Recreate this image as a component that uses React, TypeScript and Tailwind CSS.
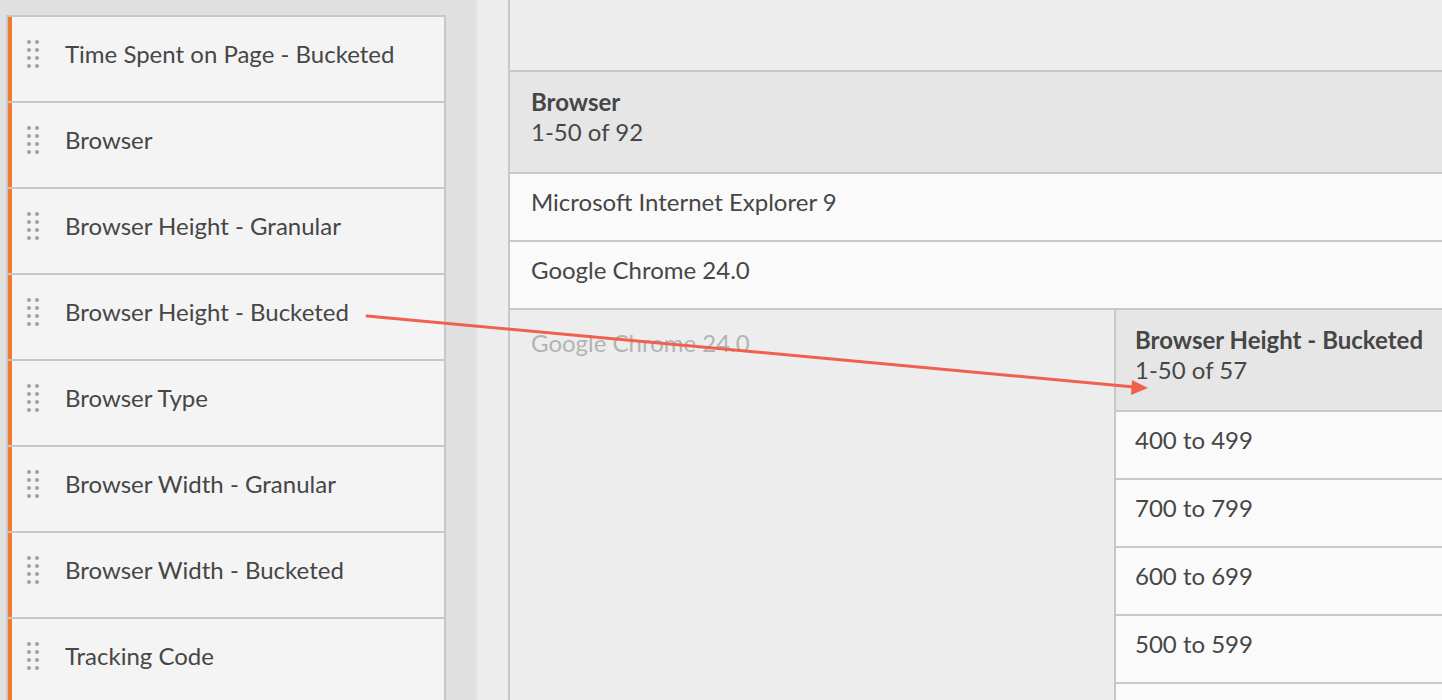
import React from 'react';

const dimensions = [
  'Time Spent on Page - Bucketed',
  'Browser',
  'Browser Height - Granular',
  'Browser Height - Bucketed',
  'Browser Type',
  'Browser Width - Granular',
  'Browser Width - Bucketed',
  'Tracking Code',
];

const nestedRows = ['400 to 499', '700 to 799', '600 to 699', '500 to 599', ''];

const DragHandle: React.FC = () => (
  <div className="grid grid-cols-2 gap-x-[4px] gap-y-[4px] w-[12px]">
    {Array.from({ length: 8 }).map((_, i) => (
      <span key={i} className="block h-[4px] w-[4px] rounded-full bg-[#a0a0a0]" />
    ))}
  </div>
);

const App: React.FC = () => {
  return (
    <div
      className="relative flex h-[700px] w-[1442px] overflow-hidden text-[#464646]"
      style={{ fontFamily: 'Lato, "Open Sans", sans-serif' }}
    >
      {/* dimension list */}
      <div className="flex w-[478px] shrink-0 bg-[#e0e0e0] border-r-2 border-[#e8e8e8]">
        <div className="ml-[6px] mt-[15px] w-[440px] border-l-2 border-r-2 border-[#c8c8c8]">
          {dimensions.map((name) => (
            <div key={name} className="flex h-[86px] border-t-2 border-[#c8c8c8] bg-[#f4f4f4]">
              <div className="w-[4px] bg-[#f37a2c]" />
              <div className="flex flex-1 items-center pb-[10px]">
                <div className="ml-[15px] mr-[26px]">
                  <DragHandle />
                </div>
                <span className="text-[24px] leading-[30px]">{name}</span>
              </div>
            </div>
          ))}
        </div>
      </div>

      {/* gutter */}
      <div className="w-[30px] shrink-0 bg-[#ededed] border-r-2 border-[#c8c8c8] box-content" />

      {/* freeform table */}
      <div className="flex min-w-0 flex-1 flex-col bg-[#ededed]">
        <div className="h-[72px] shrink-0 border-b-2 border-[#c8c8c8]" />
        <div className="h-[102px] shrink-0 border-b-2 border-[#c8c8c8] bg-[#e6e6e6] pl-[21px] pt-[15px] text-[24px] leading-[30px]">
          <div className="font-bold">Browser</div>
          <div>1-50 of 92</div>
        </div>
        <div className="flex h-[68px] shrink-0 items-center border-b-2 border-[#c8c8c8] bg-[#fafafa] pb-[10px] pl-[21px] text-[24px]">
          Microsoft Internet Explorer 9
        </div>
        <div className="flex h-[68px] shrink-0 items-center border-b-2 border-[#c8c8c8] bg-[#fafafa] pb-[10px] pl-[21px] text-[24px]">
          Google Chrome 24.0
        </div>
        <div className="flex flex-1">
          <div className="w-[604px] shrink-0 pl-[21px] pt-[18px] text-[24px] leading-[30px] text-[#b3b3b3]">
            Google Chrome 24.0
          </div>
          <div className="flex-1 border-l-2 border-[#c8c8c8]">
            <div className="h-[102px] border-b-2 border-[#c8c8c8] bg-[#e6e6e6] pl-[19px] pt-[15px] text-[24px] leading-[30px]">
              <div className="whitespace-nowrap font-bold">Browser Height - Bucketed</div>
              <div>1-50 of 57</div>
            </div>
            {nestedRows.map((r, i) => (
              <div
                key={i}
                className="flex h-[68px] items-center border-b-2 border-[#c8c8c8] bg-[#fafafa] pb-[10px] pl-[19px] text-[24px]"
              >
                {r}
              </div>
            ))}
          </div>
        </div>
      </div>

      {/* drag annotation */}
      <svg className="pointer-events-none absolute inset-0" width="1442" height="700">
        <line x1="367" y1="316" x2="1134" y2="387" stroke="#f0604d" strokeWidth="3" strokeLinecap="round" />
        <polygon points="1148,388 1132,380 1131,395" fill="#f0604d" />
      </svg>
    </div>
  );
};

export default App;
